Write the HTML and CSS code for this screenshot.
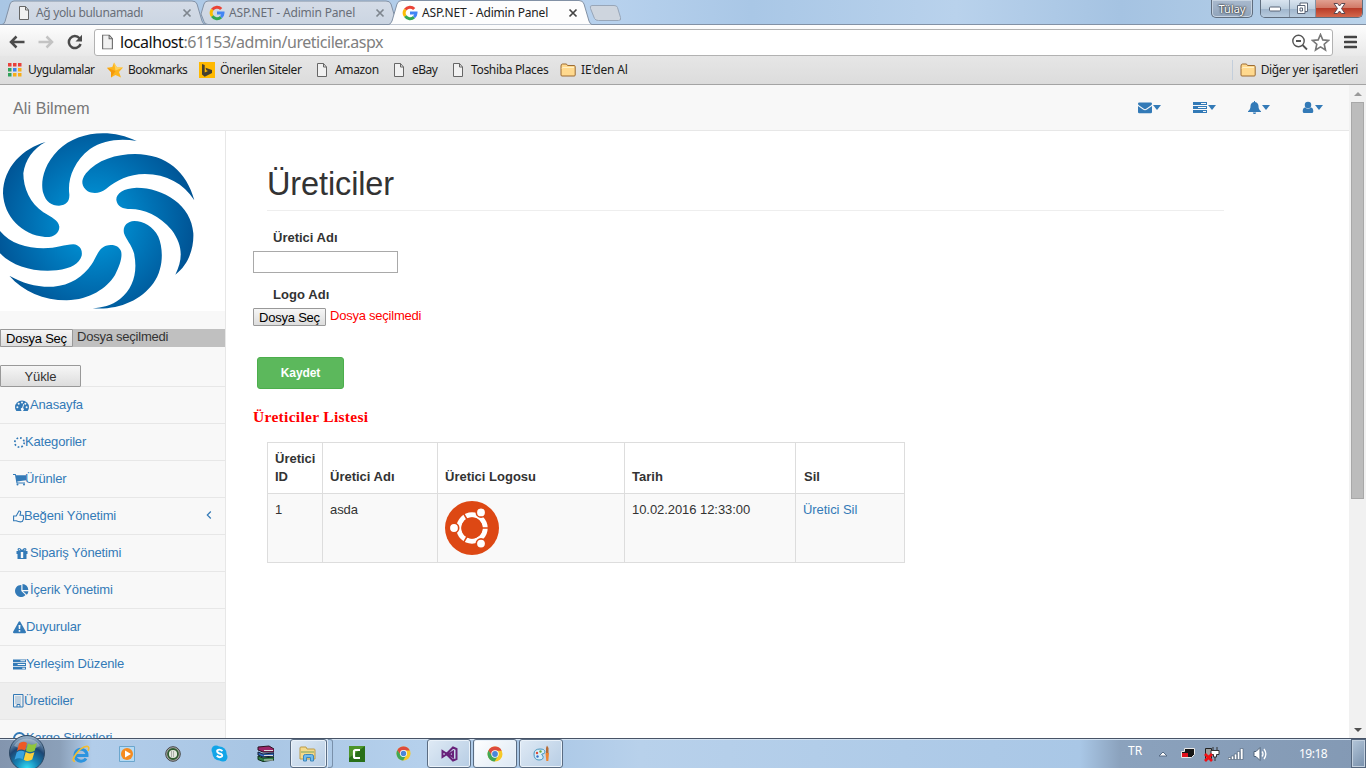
FILE: index.html
```html
<!DOCTYPE html>
<html lang="tr">
<head>
<meta charset="utf-8">
<title>ASP.NET - Adimin Panel</title>
<link rel="stylesheet" href="styles.css">
</head>
<body>
<svg class="defs" width="0" height="0">
  <defs>
    <symbol id="page" viewBox="0 0 12 14"><path d="M1.500.500h6l3 3.500v9.500h-9z" fill="#f1f1f1" stroke="#666"/><path d="M7.500.500v3.500h3" fill="none" stroke="#666"/></symbol>
    <symbol id="google" viewBox="0 0 16 16"><g fill="none" stroke-width="3"><path d="M3.300 4.600A5.700 5.700 0 0 1 12.200 4" stroke="#ea4335"/><path d="M3.300 11.200a5.700 5.700 0 0 1 0-6.600" stroke="#fbbc05"/><path d="M12 12.100a5.700 5.700 0 0 1-8.700-.9" stroke="#34a853"/><path d="M8 8h6a5.700 5.700 0 0 1-2 4.200" stroke="#4285f4"/></g></symbol>
    <symbol id="folder" viewBox="0 0 16 14"><path d="M1 12V3q0-2 1.500-2h3.500q1 0 1.500 1.500H14q1.200 0 1.200 1.200V12q0 1-1 1H2q-1 0-1-1z" fill="#ffd98e" stroke="#9c6b32"/><path d="M2 5.500q0-1 1-1h11" fill="none" stroke="#fff0c4"/></symbol>
    <symbol id="close" viewBox="0 0 10 10"><path d="M1.500 1.500l7 7m0-7l-7 7" fill="none" stroke="currentColor" stroke-width="1.700"/></symbol>
    <symbol id="tasks" viewBox="0 0 14 13"><path fill="currentColor" fill-rule="evenodd" d="M0 1h14v3H0zM8 2h5v1H8zM0 5h14v3H0zM5 6h8v1H5zM0 9h14v3H0zM10 10h3v1h-3z"/></symbol>
    <symbol id="chrome" viewBox="0 0 16 16"><circle cx="8" cy="8" r="7.500" fill="#f6c928"/><path d="M1.400 4.500A7.500 7.500 0 0 1 14.700 4.700H8L4.900 9.400z" fill="#dd4b3e"/><path d="M1.400 4.500A7.500 7.500 0 0 0 7.600 15.500L10.900 9.900 5 9.500z" fill="#3fa757"/><circle cx="8" cy="8" r="3.700" fill="#fff"/><circle cx="8" cy="8" r="2.900" fill="#4a86d8"/></symbol>
    <linearGradient id="tabfill" x1="0" y1="0" x2="0" y2="1"><stop offset="0" stop-color="#d5dce7"/><stop offset="1" stop-color="#cbd5e2"/></linearGradient>
    <radialGradient id="swirl" gradientUnits="userSpaceOnUse" cx="280" cy="290" r="310"><stop offset=".2" stop-color="#0090d3"/><stop offset=".6" stop-color="#0070b3"/><stop offset="1" stop-color="#005293"/></radialGradient>
    <radialGradient id="orb" cx=".5" cy=".95" r=".9"><stop offset="0" stop-color="#35e0f7"/><stop offset=".35" stop-color="#1686b7"/><stop offset=".7" stop-color="#1d4673"/><stop offset="1" stop-color="#8fa9c2"/></radialGradient>
  </defs>
</svg>

<header class="tabstrip">
  <svg class="tabshapes" width="640" height="25" viewBox="0 0 640 25">
    <path d="M0 24.500H2q2 0 3-3L10 4q1-3 4-3H192q4 0 5 3l5 17q1 3.500 4 3.500z" fill="url(#tabfill)" stroke="#8291a5"/>
    <path d="M201 14l3-10q1-3 4-3H386q4 0 5 3l5 17q1 3.500 4 3.500H208q-3 0-4-3z" fill="url(#tabfill)" stroke="#8291a5"/>
    <path d="M388 25q3-1 4-4L397 4q1-3.500 5-3.500H579q4 0 5 3.500l5 17q1 3.500 4 4z" fill="#fdfdfd" stroke="#8291a5"/>
    <path d="M592 5.500h22q3 0 3.500 2l3 10q1 3-2 3h-20q-3 0-4-2l-4-10q-1-3 1.500-3z" fill="#ced5de" stroke="#98a6b8"/>
  </svg>
  <div class="tab t1"><svg width="12" height="14"><use href="#page"/></svg><span class="tx1">Ağ yolu bulunamadı</span><svg width="10" height="10"><use href="#close"/></svg></div>
  <div class="tab t2"><svg width="16" height="16"><use href="#google"/></svg><span class="tx2">ASP.NET - Adimin Panel</span><svg width="10" height="10"><use href="#close"/></svg></div>
  <div class="tab t3"><svg width="16" height="16"><use href="#google"/></svg><span class="tx2">ASP.NET - Adimin Panel</span><svg width="10" height="10"><use href="#close"/></svg></div>
  <div class="winctl">
    <div class="user">Tülay</div>
    <div class="wbtns">
      <div class="wb"><svg width="14" height="8" viewBox="0 0 14 8"><rect x="1.500" y="3" width="11" height="4" rx="1" fill="#fff" stroke="#5a6577"/></svg></div>
      <div class="wb mid"><svg width="13" height="13" viewBox="0 0 13 13"><path d="M4 1h7.500v8.500H4z" fill="#fff" stroke="#5a6577"/><path d="M1.500 3.500H9v8H1.500zM4 6h2.500v3H4z" fill="#fff" stroke="#5a6577"/></svg></div>
      <div class="wb x"><svg width="13" height="11" viewBox="0 0 13 11"><path d="M1 .500h3.500l2 2.500 2-2.500H12L8.500 5.500l3.500 5H8.500l-2-2.500-2 2.500H1l3.500-5z" fill="#fff" stroke="#5b4850"/></svg></div>
    </div>
  </div>
</header>

<div class="toolbar">
  <div class="nav">
    <svg width="16" height="14" viewBox="0 0 16 14"><path d="M7.500 1.500L2 7l5.500 5.500M2 7h13.500" fill="none" stroke="#4b4b4b" stroke-width="2.500"/></svg>
    <svg width="16" height="14" viewBox="0 0 16 14"><path d="M8.500 1.500L14 7l-5.500 5.500M14 7H.5" fill="none" stroke="#c3c3c3" stroke-width="2.500"/></svg>
    <svg width="16" height="16" viewBox="0 0 16 16"><path d="M12.500 4.200A6 6 0 1 0 13.600 10" fill="none" stroke="#4b4b4b" stroke-width="2.500"/><path d="M15 .8v6.700H8.500z" fill="#4b4b4b"/></svg>
  </div>
  <div class="omni">
    <svg width="13" height="16" viewBox="0 0 12 14"><use href="#page"/></svg>
    <div class="url"><b>localhost</b>:61153/admin/ureticiler.aspx</div>
    <svg width="17" height="17" viewBox="0 0 17 17"><circle cx="7.500" cy="7" r="5.700" fill="none" stroke="#555" stroke-width="1.400"/><path d="M5 7h5M11.500 11l4.500 4.500" stroke="#555" stroke-width="1.800"/></svg>
    <svg class="star" width="19" height="19" viewBox="0 0 19 19"><path d="M9.500 1.500l2.300 5.400 5.800.5-4.400 3.800 1.300 5.800-5-3.100-5 3.100 1.300-5.800L1.400 7.400l5.800-.5z" fill="none" stroke="#777" stroke-width="1.600"/></svg>
  </div>
  <svg class="burger" width="13" height="14" viewBox="0 0 13 14"><path d="M1 2h11M1 7h11M1 12h11" stroke="#444" stroke-width="2.700" stroke-linecap="round"/></svg>
</div>

<div class="bookmarks">
  <div class="bm b1"><svg width="14" height="14" viewBox="0 0 14 14"><path d="M0 0h3.500v3.500H0zM5 0h3.500v3.500H5zM10 0h3.500v3.500H10z" fill="#e8413b"/><path d="M0 5h3.500v3.500H0zM0 10h3.500v3.500H0z" fill="#31a15a"/><path d="M5 5h3.500v3.500H5z" fill="#3b82ec"/><path d="M10 5h3.500v3.500H10zM5 10h3.500v3.500H5zM10 10h3.500v3.500H10z" fill="#f6ad19"/></svg><span>Uygulamalar</span></div>
  <div class="bm b2"><svg width="16" height="16" viewBox="0 0 16 16"><path d="M7 .500L10 5.500l6 0-4 4.500 2 5.500-5.500-2.500L4 15.500 4 10 0 5.700l5.300-.6z" fill="#fdb51c"/><path d="M7 .500l3 5 6 0-7.500 3z" fill="#ffd25b"/><path d="M0 5.700L8.500 9 4 15.500V10z" fill="#f49a0b"/></svg><span>Bookmarks</span></div>
  <div class="bm b3"><svg width="16" height="16" viewBox="0 0 16 16"><path d="M0 0h16v16H0z" fill="#ffb900"/><path d="M3 2l2.700 1v7.600L9 9 7.300 8.200 6.500 5.700 13 8v3l-7.300 3.700L3 12.500z" fill="#453f30"/></svg><span>Önerilen Siteler</span></div>
  <div class="bm b4"><svg width="12" height="14"><use href="#page"/></svg><span>Amazon</span></div>
  <div class="bm b5"><svg width="12" height="14"><use href="#page"/></svg><span>eBay</span></div>
  <div class="bm b6"><svg width="12" height="14"><use href="#page"/></svg><span>Toshiba Places</span></div>
  <div class="bm b7"><svg width="16" height="14"><use href="#folder"/></svg><span>IE'den Al</span></div>
  <div class="bm b8"><svg width="16" height="14"><use href="#folder"/></svg><span>Diğer yer işaretleri</span></div>
</div>

<div class="viewport">
  <div class="page">
    <nav class="navbar">
      <div class="brand">Ali Bilmem</div>
      <div class="tools">
        <div class="tool"><svg width="14" height="13" viewBox="0 0 14 13"><path fill="currentColor" d="M1.200 1.500h11.600q1.200 0 1.200 1.200 0 .9-1.200 1.800L8.500 7.600Q7 8.700 5.500 7.600L1.200 4.500Q0 3.600 0 2.700 0 1.500 1.200 1.500zM0 5l5 3.600q2 1.300 4 0L14 5v6q0 1.300-1.300 1.300H1.300Q0 12.300 0 11z"/></svg><i></i></div>
        <div class="tool"><svg width="14" height="13"><use href="#tasks"/></svg><i></i></div>
        <div class="tool"><svg width="13" height="13" viewBox="0 0 13 13"><path fill="currentColor" d="M6 0h1v1c2.300.4 3.500 2.300 3.500 4 0 2.500.7 4 2.500 5.300V11H0v-.7C1.800 9 2.500 7.500 2.500 5c0-1.700 1.200-3.600 3.500-4zM4.800 11.400h3.400q-.2 1.500-1.700 1.500t-1.700-1.500z"/></svg><i></i></div>
        <div class="tool"><svg width="12" height="13" viewBox="0 0 12 13"><path fill="currentColor" d="M6 .7a3.200 3.200 0 0 1 0 6.500A3.200 3.200 0 0 1 6 .7zM3.300 6.600Q6 9 8.700 6.600 11.300 6.900 11.300 10.200q0 1.900-1.600 1.900H2.300Q.7 12.100.7 10.200.7 6.900 3.300 6.600z"/></svg><i></i></div>
      </div>
    </nav>
    <div class="cols">
      <aside class="side">
        <svg class="logo" width="225" height="180" viewBox="0 18 675 540">
          <path fill="#fff" d="M0 18h675v540H0z"/>
          <g fill="url(#swirl)">
            <path d="M410 48C330 8 230 20 175 75 125 125 122 180 130 205 138 232 155 242 177 242 200 241 209 228 208 208 202 165 220 110 270 72 310 45 360 40 410 48z"/>
            <path d="M583 226C560 140 500 88 405 87 350 87 290 105 258 145 240 168 246 185 262 198 280 208 300 205 318 192 350 165 385 148 435 147 500 148 550 175 583 226z"/>
            <path d="M526 449C565 420 582 370 580 325 575 240 490 188 410 188 370 190 348 205 349 225 352 245 368 252 392 252 430 252 480 272 515 315 548 360 550 400 526 449z"/>
            <path d="M278 550C350 556 420 530 460 475 492 430 490 370 475 335 460 305 430 288 403 288 378 290 368 305 372 325 378 343 395 360 402 385 414 440 400 490 360 522 335 542 305 548 278 550z"/>
            <path d="M28 452C70 500 130 526 200 526 270 524 320 490 345 450 360 420 368 395 363 378 355 360 335 358 318 362 295 370 290 395 275 418 250 455 210 482 160 485 110 487 70 475 28 452z"/>
            <path d="M0 318C30 355 80 370 130 370 170 370 195 358 220 358 240 360 248 375 245 392 238 415 215 430 170 436 100 442 40 425 0 385z"/>
            <path d="M137 51C70 70 10 125 9 205 12 275 65 330 135 336 160 338 178 325 178 305 175 285 155 278 130 262 90 235 70 190 70 145 75 105 100 70 137 51z"/>
          </g>
        </svg>
        <div class="upload"><button class="file">Dosya Seç</button><span>Dosya seçilmedi</span></div>
        <button class="load">Yükle</button>
        <ul class="menu">
          <li><svg class="pad" width="14" height="13" viewBox="0 0 14 13"><path fill="currentColor" d="M0 8a7 6.500 0 0 1 14 0q0 2.500-1.300 4H1.300Q0 10.500 0 8z"/><g fill="#f8f8f8"><circle cx="2.400" cy="8.200" r="1"/><circle cx="3.700" cy="4.800" r="1"/><circle cx="7" cy="3.400" r="1"/><circle cx="10.300" cy="4.800" r="1"/><circle cx="11.600" cy="8.200" r="1"/><path d="M8.300 5l.8.200-1 3.800a1.500 1.500 0 1 1-.9-.2z"/></g></svg>Anasayfa</li>
          <li><svg width="12" height="13" viewBox="0 0 12 13"><circle cx="6.500" cy="6.500" r="4.700" fill="none" stroke="currentColor" stroke-width="1.700" stroke-dasharray="1.700 2"/></svg>Kategoriler</li>
          <li><svg class="cart" width="13" height="13" viewBox="0 0 13 13"><path fill="currentColor" d="M0 1h2.700l.4 1.300H13v5L4.300 8.400l.2 1H12v1H3.500L2 2H0z"/><circle cx="4.500" cy="11.500" r="1" fill="currentColor"/><circle cx="11" cy="11.500" r="1" fill="currentColor"/></svg>Ürünler</li>
          <li><svg width="11" height="13" viewBox="0 0 11 13"><path fill="none" stroke="currentColor" stroke-width="1.100" d="M.6 6h2.600L6 1q2-.3 1.600 2L7 5.300h2.500q1.500.3.900 1.800.5.700 0 1.500.2.900-.5 1.500 0 1.700-1.500 1.700Q5.500 12 3.200 10.800H.6z"/></svg>Beğeni Yönetimi<svg class="chev" width="6" height="8" viewBox="0 0 6 8"><path d="M4.800.500L1.300 4l3.500 3.500" fill="none" stroke="currentColor" stroke-width="1.200"/></svg></li>
          <li><svg class="pad" width="14" height="13" viewBox="0 0 14 13"><path fill="currentColor" fill-rule="evenodd" d="M1.500 4h3Q2.500 4 2.500 2.500T4 1q1.500 0 3 2 1.500-2 3-2 1.500 0 1.500 1.500T9.500 4h3v3h-1v5h-9V7h-1zM4 2q-1 1 1.500 1.500L4.500 2zM10 2L8.500 3.500Q11 3 10 2zM5.800 5v6h2.400V5z"/></svg>Sipariş Yönetimi</li>
          <li><svg class="pad" width="14" height="13" viewBox="0 0 14 13"><path fill="currentColor" d="M6.300 1v6l4.200 4A6 6 0 1 1 6.300 1zM7.500 0a6 6 0 0 1 5.800 6H7.500zM8 7.300h5.400q-.2 2-1.600 3.500z"/></svg>İçerik Yönetimi</li>
          <li><svg width="13" height="13" viewBox="0 0 13 13"><path fill="currentColor" fill-rule="evenodd" d="M5.700.8q.8-1 1.600 0l5.600 10q.4 1.400-1 1.400H1.100q-1.400 0-1-1.400zM5.500 4l.3 4h1.400l.3-4zM5.700 9v1.700h1.600V9z"/></svg>Duyurular</li>
          <li><svg width="13" height="13"><use href="#tasks"/></svg>Yerleşim Düzenle</li>
          <li class="on"><svg width="11" height="14" viewBox="0 0 11 14"><path fill="none" stroke="currentColor" d="M.500.500h9.500v12.500H.500zM4 13v-2.500h3V13"/><path stroke="currentColor" stroke-dasharray="1 1" d="M2.500 3h6M2.500 5h6M2.500 7h6M2.500 9h6"/></svg>Üreticiler</li>
          <li><svg width="13" height="13" viewBox="0 0 13 13"><circle cx="6.500" cy="6.500" r="5.500" fill="none" stroke="currentColor" stroke-width="2"/></svg>Kargo Şirketleri</li>
        </ul>
      </aside>
      <main class="main">
        <h1>Üreticiler</h1>
        <label class="lb1">Üretici Adı</label>
        <input class="inp" type="text">
        <label class="lb2">Logo Adı</label>
        <div class="pick"><button class="file">Dosya Seç</button><span>Dosya seçilmedi</span></div>
        <button class="save">Kaydet</button>
        <h2>Üreticiler Listesi</h2>
        <table>
          <colgroup><col class="c1"><col class="c2"><col class="c3"><col class="c4"><col class="c5"></colgroup>
          <tr class="hd"><th>Üretici ID</th><th>Üretici Adı</th><th>Üretici Logosu</th><th>Tarih</th><th class="sil">Sil</th></tr>
          <tr class="bd"><td>1</td><td>asda</td><td><svg class="ubuntu" width="54" height="54" viewBox="0 0 54 54"><circle cx="27" cy="27" r="27" fill="#dd4814"/><circle cx="27" cy="27" r="13.200" fill="none" stroke="#fff" stroke-width="5"/><g stroke="#dd4814" stroke-width="1.600"><path d="M27 27h17M27 27l-8.500-14.700M27 27l-8.500 14.700"/></g><circle cx="27" cy="27" r="10.500" fill="#dd4814"/><g fill="#fff" stroke="#dd4814" stroke-width="1.600"><circle cx="9" cy="27" r="4.700"/><circle cx="36" cy="11.400" r="4.700"/><circle cx="36" cy="42.600" r="4.700"/></g></svg></td><td>10.02.2016 12:33:00</td><td class="del">Üretici Sil</td></tr>
        </table>
      </main>
    </div>
  </div>
  <div class="scroll"><i class="up"></i><div class="thumb"></div><i class="down"></i></div>
</div>

<footer class="taskbar">
  <div class="start"><svg width="38" height="38" viewBox="0 0 38 38"><circle cx="19" cy="19" r="17.500" fill="url(#orb)" stroke="#2d4864"/><path d="M6 12A15 15 0 0 1 32 12Q20 19 6 12z" fill="#fff" opacity=".3"/><path d="M11 9.500q4-3 8-.5l-2 7.500q-4-2-8 .5z" fill="#ee5a24"/><path d="M20 9.500q4 2.500 9-.5l-2.300 7.700q-5 2.500-8.700 0z" fill="#8fc63d"/><path d="M8.700 18.300q4-2.700 8-.5l-2 7.400q-4-2-8.200.6z" fill="#39a2e0"/><path d="M17.700 18.100q4 2.500 8.700.2L24.200 25.500q-4.500 2.800-8.500.3z" fill="#fcd03b"/></svg></div>
  <div class="slot"><svg width="18" height="18" viewBox="0 0 18 18"><path d="M4 10.500h11A6 6 0 1 0 14 13.500" fill="none" stroke="#2c94df" stroke-width="3"/><path d="M3 16.500Q-1 16 4 9T15 1.300q3 .7 1 4.500" fill="none" stroke="#f3bd2e" stroke-width="1.600"/></svg></div>
  <div class="slot"><svg width="16" height="16" viewBox="0 0 16 16"><path d="M.500.500h15v15H.500z" fill="#b5daf4" stroke="#6ba6cd"/><circle cx="8" cy="8" r="6" fill="#f68b1f"/><path d="M6 4.500v7l6-3.500z" fill="#fff"/></svg></div>
  <div class="slot"><svg width="16" height="16" viewBox="0 0 16 16"><circle cx="8" cy="8" r="7.300" fill="#aaa" stroke="#444"/><circle cx="8" cy="8" r="5" fill="#e3e8df" stroke="#315c31" stroke-width="1.800"/><path d="M6 6h4M6 8h4M6 10h4" stroke="#777" stroke-dasharray="1 1"/></svg></div>
  <div class="slot"><svg width="17" height="17" viewBox="0 0 17 17"><circle cx="5" cy="5" r="4.500" fill="#12a5e8"/><circle cx="12" cy="12" r="4.500" fill="#12a5e8"/><circle cx="8.500" cy="8.500" r="7" fill="#12a5e8"/><path d="M11.500 6Q8.500 3.500 6.200 5.500q-.5 2 2.300 3 3.500.8 2.500 2.800-2.300 2-5.300-.5" fill="none" stroke="#fff" stroke-width="1.900"/></svg></div>
  <div class="slot"><svg width="17" height="17" viewBox="0 0 17 17"><path d="M1 2l11-1 5 3v3L6 7 1 5z" fill="#9c2568" stroke="#2b1220"/><path d="M1 7l5 2 11-1v3L6 12 1 10z" fill="#3268bc" stroke="#111e38"/><path d="M1 11l5 2 11-1v3l-11 1.500-5-2z" fill="#308246" stroke="#0f2c17"/><path d="M7 5.500h9M7 10.500h9M7 15h9" stroke="#ddd"/></svg></div>
  <div class="slot"><div class="tb"><svg width="18" height="16" viewBox="0 0 18 16"><path d="M1 13V2q0-1 1-1h5l1 2h7q1 0 1 1v9z" fill="#f4da8c" stroke="#bb9b49"/><path d="M2 6h13" stroke="#78a35d"/><path d="M4.500 15V10q0-1.500 2-1.500h6q2 0 2 1.500v5h-3v-3.500h-4V15z" fill="#6fbbed" stroke="#3d86bb"/></svg></div><span class="stack"></span></div>
  <div class="slot"><svg width="16" height="16" viewBox="0 0 16 16"><path d="M0 0h16v16H0z" fill="#286f18"/><path d="M0 0h16L0 12z" fill="#4d952b"/><path d="M11 4H6.500Q5 4 5 5.500v5Q5 12 6.500 12H11" fill="none" stroke="#fff" stroke-width="2.200"/></svg></div>
  <div class="slot"><svg width="15" height="15"><use href="#chrome"/></svg></div>
  <div class="slot"><div class="tb wide"><svg width="17" height="16" viewBox="0 0 17 16"><path d="M12 1.500l3.500 1.500v10L12 14.500 4.500 7 1.500 5v6l3-2 7.500-7.500zM12 5.500L8 8l4 3z" fill="none" stroke="#68217a" stroke-width="2"/></svg></div></div>
  <div class="slot"><div class="tb wide lit"><svg width="16" height="16"><use href="#chrome"/></svg></div></div>
  <div class="slot"><div class="tb wide"><svg width="17" height="17" viewBox="0 0 17 17"><path d="M1 9q0-5 6-5 5 0 5 3 0 2-3 2-1 1 1 2 1 4-4 4-5 0-5-6z" fill="#d7eefa" stroke="#4b97bd"/><circle cx="4" cy="8" r="1.200" fill="#db4b37"/><circle cx="7.500" cy="6.500" r="1.200" fill="#67ab43"/><circle cx="4.500" cy="11.500" r="1.200" fill="#3570c4"/><path d="M13 8V3l1-2.500L15.500 3v5z" fill="#b66a35"/><path d="M12.500 8h3.500l-.7 8h-2z" fill="#ed8632"/></svg></div></div>
  <div class="tray">
    <span class="lang">TR</span>
    <svg width="10" height="6" viewBox="0 0 10 6"><path d="M1 5l4-4 4 4z" fill="#fff" stroke="#566b84"/></svg>
    <svg width="16" height="13" viewBox="0 0 16 13"><path d="M4.500 1.500h10v6l-3 3h-10v-6h3z" fill="#161616" stroke="#e9e9e9"/><path d="M2 6h6v4H2z" fill="#e0101c"/></svg>
    <svg width="16" height="16" viewBox="0 0 16 16"><path d="M1.500 2.500h6v10h-6z" fill="#9c9c9c" stroke="#222"/><path d="M7 4.500h8v4h-2.500V11h-3V8.500H7zM9 1v3M13 1v3M11 11v4" fill="#fff" stroke="#333"/><path d="M1 8l7 7m0-7l-7 7" stroke="#f00e14" stroke-width="2.700"/></svg>
    <svg width="17" height="13" viewBox="0 0 17 13"><g fill="#fff" stroke="#455971" stroke-width=".6"><path d="M.3 10.500h2.500v2H.3zM3.300 9h2.500v3.500H3.300zM6.300 7h2.500v5.500H6.300zM9.300 4.500h2.500v8H9.300zM12.300 1.500h2.700v11h-2.700z"/></g></svg>
    <svg width="15" height="14" viewBox="0 0 15 14"><path d="M1 4.500h2L7 .500v13L3 9.500H1z" fill="#fff" stroke="#51647b"/><path d="M9 4.500q2 2.500 0 5M11 2q3.700 5 0 10" fill="none" stroke="#fff" stroke-width="1.300"/></svg>
    <span class="clock">19:18</span>
    <div class="desk"></div>
  </div>
</footer>
</body>
</html>
```
FILE: styles.css
```css
* { box-sizing: border-box; }
body { margin: 0; width: 1366px; height: 768px; overflow: hidden; display: flex; flex-direction: column; font: 13px/18px "Liberation Sans", Arial, sans-serif; color: #333; background: #fff; }
svg { display: block; flex: none; }
.defs { position: absolute; }

.tabstrip { position: relative; height: 25px; flex: none; display: flex; background: linear-gradient(90deg, #a9c6e4, #b7d1ed 45%, #a9c7e6 55%, #b9d2ec 70%, #a5c3e2 82%, #bad3ea); border-bottom: 1px solid #8291a5; font: 12px/18px "Noto Sans", sans-serif; color: #686e78; }
.tabshapes { position: absolute; left: 0; top: 0; }
.tab { position: relative; display: flex; align-items: center; height: 26px; flex: none; }
.tab span { flex: 1; white-space: nowrap; }
.tab svg:last-child { color: #7e858e; }
.t1 { width: 192px; padding-left: 18px; gap: 6px; }
.t2 { width: 193px; padding-left: 17px; gap: 4px; }
.t3 { width: 193px; padding-left: 17px; gap: 4px; color: #222; }
.t3 svg:last-child { color: #444; }
.tx1 { letter-spacing: -.34px; }
.tx2 { letter-spacing: -.18px; }
.winctl { position: relative; margin-left: auto; display: flex; gap: 7px; padding-right: 3px; }
.user { width: 42px; height: 18px; border: 1px solid #5f6d7e; border-top: 0; border-radius: 0 0 5px 5px; background: linear-gradient(#a9bace, #90a3ba); color: #fff; font: 11px/17px "Noto Sans", sans-serif; text-align: center; text-shadow: 0 0 2px #222, 0 0 2px #222; box-shadow: inset 0 0 0 1px #c6d3e1; }
.wbtns { display: flex; width: 103px; height: 18px; border: 1px solid #5f6d7e; border-top: 0; border-radius: 0 0 5px 5px; overflow: hidden; }
.wb { width: 28px; display: flex; align-items: center; justify-content: center; background: linear-gradient(#d9e4ef, #bdcede 50%, #9fb5cc 52%, #b8cbde); padding-bottom: 1px; }
.wb.mid { border-left: 1px solid #8493a5; border-right: 1px solid #8493a5; width: 27px; }
.wb.x { flex: 1; background: linear-gradient(#e1a090, #d27a67 45%, #b93c28 50%, #d4684c); }

.toolbar { height: 31px; flex: none; display: flex; align-items: center; background: linear-gradient(#fdfdfd, #e9e9e9); padding: 3px 9px 0 9px; }
.nav { display: flex; align-items: center; gap: 13px; width: 85px; }
.omni { flex: 1; height: 27px; display: flex; align-items: center; border: 1px solid #b2b2b2; border-radius: 3px; background: #fff; padding: 0 2px 0 6px; margin-right: 11px; }
.url { flex: 1; margin-left: 6px; font: 16px/22px "Noto Sans", sans-serif; color: #808080; letter-spacing: -.47px; }
.url b { font-weight: 400; color: #111; }
.star { margin-left: 3px; }

.bookmarks { height: 29px; flex: none; display: flex; align-items: center; background: linear-gradient(#e6e6e6, #dcdcdc); border-bottom: 1px solid #a4a4a4; font: 12px/18px "Noto Sans", sans-serif; color: #1c1c1c; padding: 0 8px; }
.bm { display: flex; align-items: center; white-space: nowrap; flex: none; letter-spacing: -.33px; }
.b1 { width: 99px; gap: 6px; letter-spacing: -.52px; }
.b2 { width: 92px; gap: 5px; letter-spacing: -.5px; }
.b3 { width: 117px; gap: 5px; letter-spacing: -.38px; }
.b4 { width: 77px; gap: 7px; letter-spacing: -.35px; }
.b5 { width: 59px; gap: 7px; letter-spacing: -.5px; }
.b6 { width: 108px; gap: 7px; }
.b7 { gap: 5px; letter-spacing: -.15px; }
.b8 { margin-left: auto; gap: 5px; height: 20px; padding-left: 7px; border-left: 1px solid #c3cedb; letter-spacing: -.35px; }

.viewport { flex: 1; min-height: 0; display: flex; overflow: hidden; }
.page { width: 1349px; display: flex; flex-direction: column; overflow: hidden; }
.navbar { height: 46px; flex: none; display: flex; align-items: center; justify-content: space-between; background: #f8f8f8; border-bottom: 1px solid #e7e7e7; padding: 0 26px 0 13px; color: #337ab7; }
.brand { font-size: 16px; color: #777; padding-top: 2px; letter-spacing: .1px; }
.tools { display: flex; gap: 32px; }
.tool { display: flex; align-items: center; gap: 1px; }
.tool i { border: 4px solid transparent; border-top: 5px solid #337ab7; border-bottom: 0; }
.cols { flex: 1; display: flex; min-height: 0; }
.side { width: 226px; flex: none; background: #f8f8f8; border-right: 1px solid #e7e7e7; overflow: hidden; }
.upload, .pick { display: flex; height: 18px; letter-spacing: -.23px; }
.upload { margin-top: 18px; background: #c0c0c0; }
.upload span, .pick span { line-height: 15px; margin-left: 4px; }
button { font: 13px/15px "Liberation Sans", Arial, sans-serif; padding: 0; color: #000; border: 1px solid #999; border-radius: 1px; background: linear-gradient(#f6f6f6, #ddd); }
.file { width: 73px; height: 18px; padding-top: 1px; flex: none; letter-spacing: -.23px; }
.load { position: relative; display: block; width: 81px; height: 22px; margin-top: 18px; color: #333; letter-spacing: -.1px; }
.menu { list-style: none; margin: -1px 0 0; padding: 0; color: #337ab7; border-top: 1px solid #e7e7e7; letter-spacing: -.16px; }
.menu li { display: flex; align-items: center; height: 37px; border-bottom: 1px solid #e7e7e7; padding-left: 13px; }
.menu .pad { margin: 0 1px 0 2px; }
.menu .cart { margin-right: -1px; }
.menu .chev { margin: 0 13px 3px auto; }
.menu .on { background: #eee; }

.main { padding: 32px 0 0 27px; width: 999px; display: flex; flex-direction: column; align-items: flex-start; }
h1 { width: 957px; height: 48px; margin: 0 0 0 14px; font-weight: 400; font-size: 32.500px; line-height: 43px; border-bottom: 1px solid #eee; letter-spacing: -.12px; }
label { font-weight: 700; margin-left: 20px; }
.lb1 { margin-top: 18px; }
.inp { width: 145px; height: 22px; border: 1px solid #a9a9a9; margin-top: 4px; padding: 0; }
.lb2 { margin-top: 13px; letter-spacing: .08px; }
.pick { margin-top: 4px; color: #f00; }
.save { width: 87px; height: 32px; margin: 31px 0 0 4px; background: #5cb85c; border: 1px solid #4cae4c; border-radius: 3px; color: #fff; font-weight: 700; font-size: 12px; letter-spacing: -.1px; }
h2 { margin: 19px 0 0; font: 700 15.500px/18px "Liberation Serif", serif; color: #f00; letter-spacing: .3px; }
table { width: 638px; margin: 16px 0 0 14px; border-collapse: collapse; table-layout: fixed; }
.c1 { width: 55px; } .c2 { width: 115px; } .c3 { width: 187px; } .c4 { width: 171px; } .c5 { width: 109px; }
th, td { border: 1px solid #ddd; text-align: left; padding: 7px 0 7px 7px; vertical-align: top; }
th { vertical-align: bottom; }
th.sil { padding-left: 8px; }
td { letter-spacing: -.06px; }
.hd { height: 51px; }
.bd { height: 69px; background: #f9f9f9; }
.del { color: #337ab7; }

.scroll { width: 17px; background: #f1f1f1; display: flex; flex-direction: column; align-items: center; padding: 7px 0 6px; }
.scroll i { border: 4px solid transparent; }
.scroll .up { border-bottom-color: #999; border-top: 0; }
.scroll .down { border-top-color: #505050; border-bottom: 0; margin-top: auto; }
.thumb { width: 13px; height: 397px; margin-top: 6px; background: #bcbcbc; border: 1px solid #a8a8a8; }

.taskbar { position: relative; height: 30px; flex: none; display: flex; border-top: 1px solid #475366; box-shadow: inset 0 1px #d4e3f2; background: linear-gradient(90deg, #8395ae, #8ba0b9 60px, #b2cdea 92px, #a9c6e4 250px, #b5d0ec 420px, #a8c6e5 520px, #b8d1eb 640px, #a9c7e6 1080px, #8ba2bd 1120px, #8399b4); }
.start { width: 58px; padding-left: 8px; margin-top: -5px; }
.slot { width: 46px; display: flex; align-items: center; justify-content: center; flex: none; }
.tb { width: 37px; height: 29px; display: flex; align-items: center; justify-content: center; border: 1px solid #5a6c82; border-radius: 3px; background: linear-gradient(135deg, #dfeaf5, #b7cde4); box-shadow: inset 0 0 0 1px #eaf2fa; }
.wide { width: 44px; }
.lit { background: linear-gradient(135deg, #fff, #dce8f4); }
.stack { width: 6px; height: 29px; border: 1px solid #7990aa; border-left: 1px solid #dce9f5; border-radius: 0 3px 3px 0; }
.tray { margin-left: auto; display: flex; align-items: center; color: #fff; font: 12px/16px "Noto Sans", sans-serif; }
.tray svg { margin-right: 8px; }
.lang { width: 30px; margin-top: -6px; font-size: 12px; }
.tray svg:nth-of-type(1) { margin-right: 12px; }
.clock { width: 52px; margin-left: 23px; letter-spacing: -.5px; }
.desk { width: 15px; height: 29px; border: 1px solid #54667d; background: linear-gradient(135deg, #b4c6d9, #7890ac); box-shadow: inset 0 0 0 1px #c2d0df; }
```
